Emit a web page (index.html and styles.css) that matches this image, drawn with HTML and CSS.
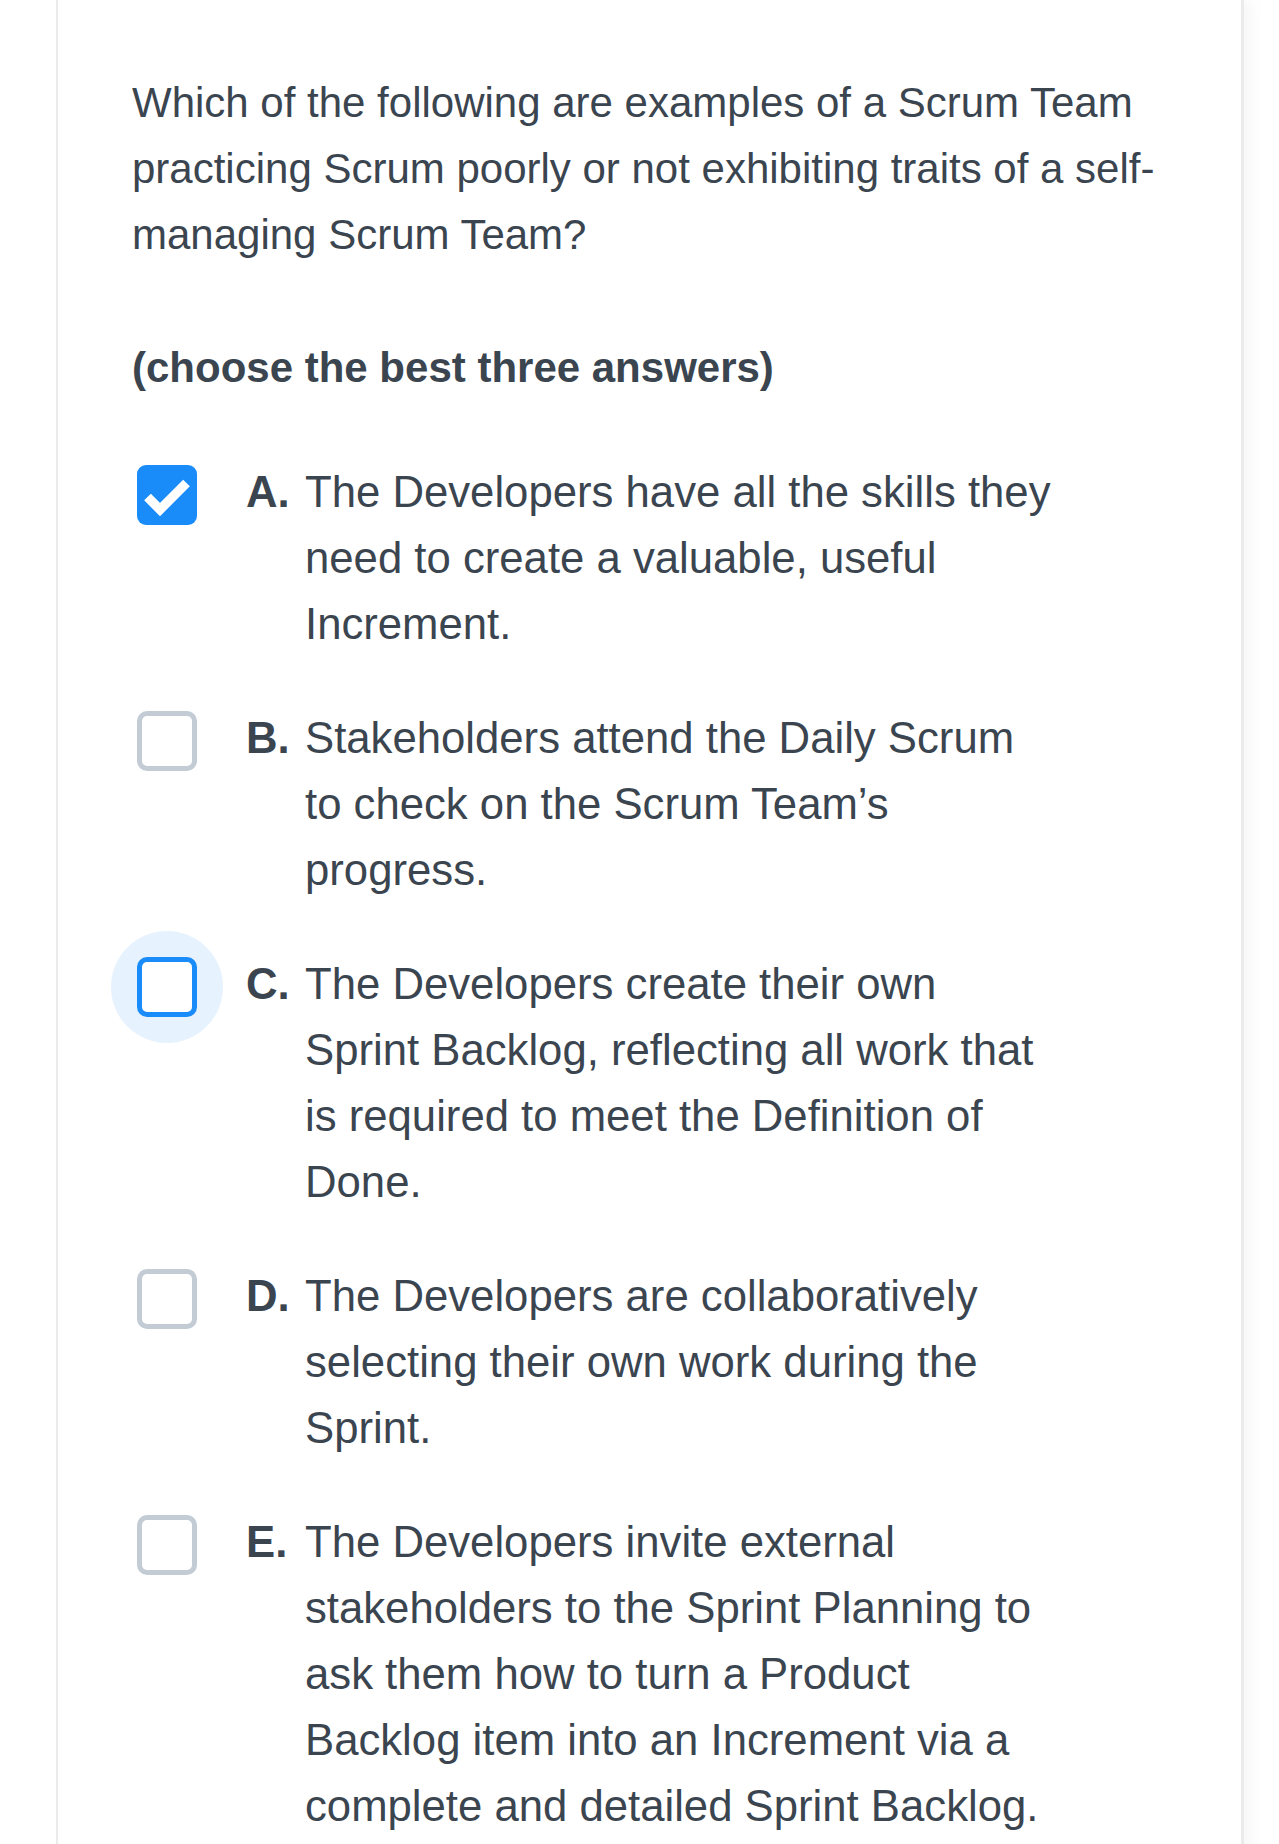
FILE: index.html
```html
<!DOCTYPE html>
<html lang="en">
<head>
<meta charset="utf-8">
<title>Question</title>
<link rel="stylesheet" href="styles.css">
</head>
<body>
<main class="card">
  <p class="question">Which of the following are examples of a Scrum Team practicing Scrum poorly or not exhibiting traits of a self-managing Scrum Team?</p>
  <p class="hint">(choose the best three answers)</p>
  <ul class="options">
    <li class="option">
      <span class="box-cell"><span class="box checked"><svg viewBox="0 0 60 60" width="60" height="60"><polyline points="10.5,32 23,44.5 49.5,18" fill="none" stroke="#fff" stroke-width="9.5" stroke-linejoin="miter" stroke-linecap="butt"/></svg></span></span>
      <span class="letter">A.</span>
      <span class="text">The Developers have all the skills they need to create a valuable, useful Increment.</span>
    </li>
    <li class="option">
      <span class="box-cell"><span class="box"></span></span>
      <span class="letter">B.</span>
      <span class="text">Stakeholders attend the Daily Scrum to check on the Scrum Team’s progress.</span>
    </li>
    <li class="option">
      <span class="box-cell"><span class="ring"></span><span class="box focused"></span></span>
      <span class="letter">C.</span>
      <span class="text">The Developers create their own Sprint Backlog, reflecting all work that is required to meet the Definition of Done.</span>
    </li>
    <li class="option">
      <span class="box-cell"><span class="box"></span></span>
      <span class="letter">D.</span>
      <span class="text">The Developers are collaboratively selecting their own work during the Sprint.</span>
    </li>
    <li class="option">
      <span class="box-cell"><span class="box"></span></span>
      <span class="letter">E.</span>
      <span class="text">The Developers invite external stakeholders to the Sprint Planning to ask them how to turn a Product Backlog item into an Increment via a complete and detailed Sprint Backlog.</span>
    </li>
  </ul>
</main>
</body>
</html>
```

FILE: styles.css
```css
html, body {
  margin: 0;
  padding: 0;
  background: #ffffff;
}

body {
  font-family: "Liberation Sans", Arial, Helvetica, sans-serif;
  color: #3b4550;
  overflow: hidden;
}

.card {
  margin-left: 56px;
  width: 1188px;
  box-sizing: border-box;
  border-left: 2px solid #ebebeb;
  border-right: 3px solid #ebebeb;
  box-shadow: 8px 0 14px rgba(0, 0, 0, 0.035);
  padding: 70px 75px 40px 74px;
  min-height: 1900px;
  background: #fff;
}

.question {
  margin: 0;
  font-size: 42px;
  line-height: 66px;
}

.hint {
  margin: 67px 0 0 0;
  font-size: 42px;
  line-height: 66px;
  font-weight: bold;
}

.options {
  list-style: none;
  margin: 58px 0 0 0;
  padding: 0;
}

.option {
  display: grid;
  grid-template-columns: 114px 59px 755px;
  font-size: 43.7px;
  line-height: 66px;
  margin-bottom: 48px;
}

.box-cell {
  position: relative;
  padding-top: 6px;
  padding-left: 5px;
}

.box {
  position: relative;
  display: block;
  width: 60px;
  height: 60px;
  box-sizing: border-box;
  border: 5px solid #c3ccd5;
  border-radius: 10px;
  background: #fff;
}

.box.checked {
  border: none;
  background: #1a8cfa;
  border-radius: 9px;
}

.box.checked svg {
  display: block;
}

.box.focused {
  border-color: #1a8cfa;
}

.ring {
  position: absolute;
  left: -21px;
  top: -20px;
  width: 112px;
  height: 112px;
  border-radius: 50%;
  background: #e6f2fd;
}

.letter {
  font-weight: bold;
}

.text {
  display: block;
}
```
